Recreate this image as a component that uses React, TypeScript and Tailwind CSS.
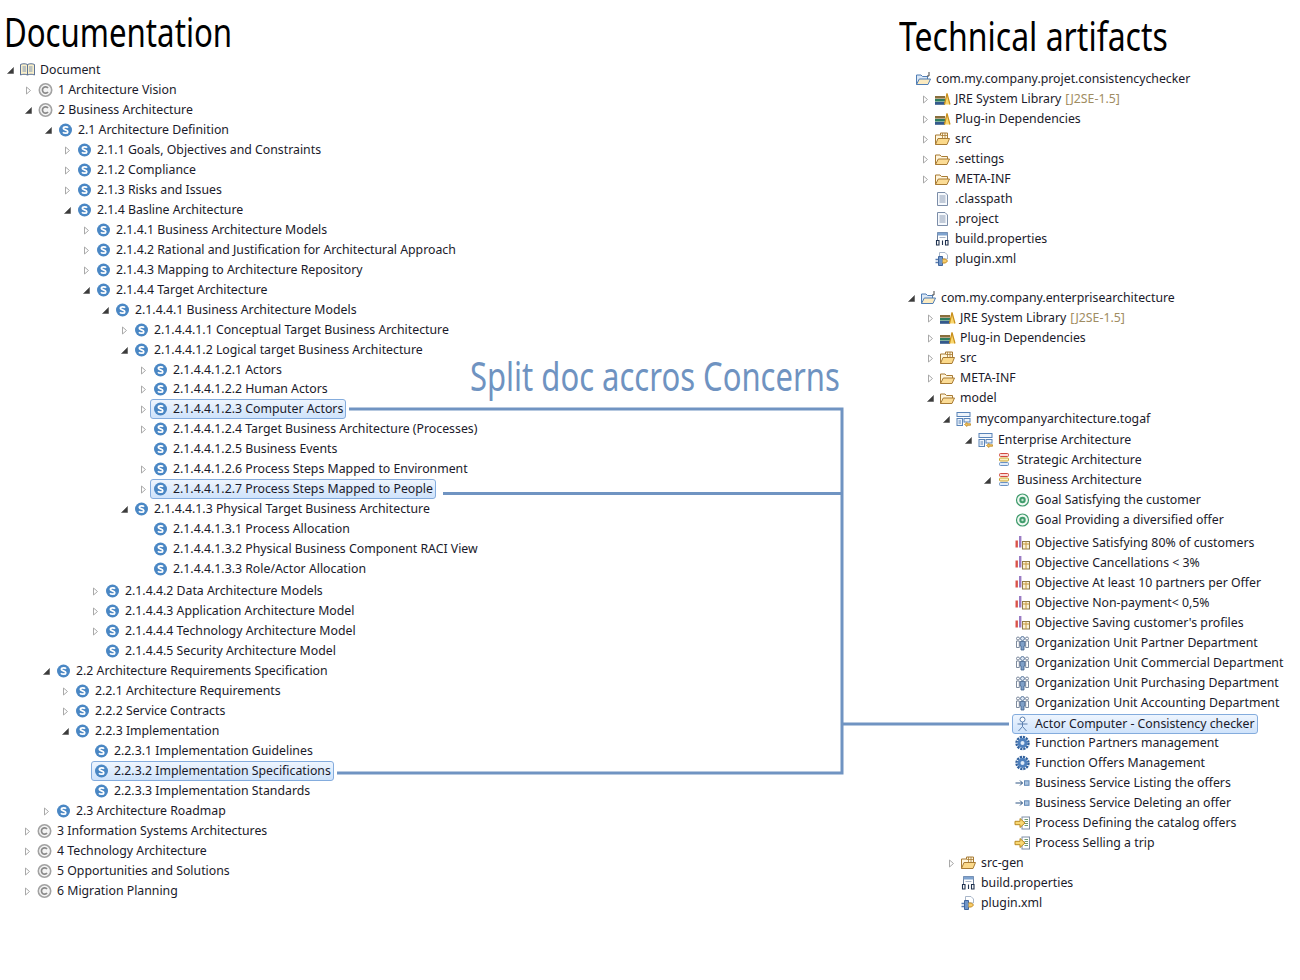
import React from 'react'

type IconName = 'book' | 'copy' | 'sec' | 'project' | 'lib' | 'pkg' | 'folder' | 'file' | 'props' | 'plugin' | 'togaf' | 'layer' | 'goal' | 'objective' | 'org' | 'actor' | 'gear' | 'service' | 'process'

type Item = {
    x: number
    label: string
    icon: IconName
    arrow?: 'open' | 'down'
    selected?: boolean
    note?: string
    space?: string
}

const docRows: Item[] = [
    { x: 40, label: 'Document', icon: 'book', arrow: 'down' },
    { x: 58, label: '1 Architecture Vision', icon: 'copy', arrow: 'open' },
    { x: 58, label: '2 Business Architecture', icon: 'copy', arrow: 'down' },
    { x: 78, label: '2.1 Architecture Definition', icon: 'sec', arrow: 'down' },
    { x: 97, label: '2.1.1 Goals, Objectives and Constraints', icon: 'sec', arrow: 'open' },
    { x: 97, label: '2.1.2 Compliance', icon: 'sec', arrow: 'open' },
    { x: 97, label: '2.1.3 Risks and Issues', icon: 'sec', arrow: 'open' },
    { x: 97, label: '2.1.4 Basline Architecture', icon: 'sec', arrow: 'down' },
    { x: 116, label: '2.1.4.1 Business Architecture Models', icon: 'sec', arrow: 'open' },
    { x: 116, label: '2.1.4.2 Rational and Justification for Architectural Approach', icon: 'sec', arrow: 'open' },
    { x: 116, label: '2.1.4.3 Mapping to Architecture Repository', icon: 'sec', arrow: 'open' },
    { x: 116, label: '2.1.4.4 Target Architecture', icon: 'sec', arrow: 'down' },
    { x: 135, label: '2.1.4.4.1 Business Architecture Models', icon: 'sec', arrow: 'down' },
    { x: 154, label: '2.1.4.4.1.1 Conceptual Target Business Architecture', icon: 'sec', arrow: 'open' },
    { x: 154, label: '2.1.4.4.1.2 Logical target Business Architecture', icon: 'sec', arrow: 'down' },
    { x: 173, label: '2.1.4.4.1.2.1 Actors', icon: 'sec', arrow: 'open' },
    { x: 173, label: '2.1.4.4.1.2.2 Human Actors', icon: 'sec', arrow: 'open', space: '-mt-px' },
    { x: 173, label: '2.1.4.4.1.2.3 Computer Actors', icon: 'sec', arrow: 'open', selected: true },
    { x: 173, label: '2.1.4.4.1.2.4 Target Business Architecture (Processes)', icon: 'sec', arrow: 'open' },
    { x: 173, label: '2.1.4.4.1.2.5 Business Events', icon: 'sec' },
    { x: 173, label: '2.1.4.4.1.2.6 Process Steps Mapped to Environment', icon: 'sec', arrow: 'open' },
    { x: 173, label: '2.1.4.4.1.2.7 Process Steps Mapped to People', icon: 'sec', arrow: 'open', selected: true },
    { x: 154, label: '2.1.4.4.1.3 Physical Target Business Architecture', icon: 'sec', arrow: 'down' },
    { x: 173, label: '2.1.4.4.1.3.1 Process Allocation', icon: 'sec' },
    { x: 173, label: '2.1.4.4.1.3.2 Physical Business Component RACI View', icon: 'sec' },
    { x: 173, label: '2.1.4.4.1.3.3 Role/Actor Allocation', icon: 'sec' },
    { x: 125, label: '2.1.4.4.2 Data Architecture Models', icon: 'sec', arrow: 'open', space: 'mt-[2px]' },
    { x: 125, label: '2.1.4.4.3 Application Architecture Model', icon: 'sec', arrow: 'open' },
    { x: 125, label: '2.1.4.4.4 Technology Architecture Model', icon: 'sec', arrow: 'open' },
    { x: 125, label: '2.1.4.4.5 Security Architecture Model', icon: 'sec' },
    { x: 76, label: '2.2 Architecture Requirements Specification', icon: 'sec', arrow: 'down' },
    { x: 95, label: '2.2.1 Architecture Requirements', icon: 'sec', arrow: 'open' },
    { x: 95, label: '2.2.2 Service Contracts', icon: 'sec', arrow: 'open' },
    { x: 95, label: '2.2.3 Implementation', icon: 'sec', arrow: 'down' },
    { x: 114, label: '2.2.3.1 Implementation Guidelines', icon: 'sec' },
    { x: 114, label: '2.2.3.2 Implementation Specifications', icon: 'sec', selected: true },
    { x: 114, label: '2.2.3.3 Implementation Standards', icon: 'sec' },
    { x: 76, label: '2.3 Architecture Roadmap', icon: 'sec', arrow: 'open' },
    { x: 57, label: '3 Information Systems Architectures', icon: 'copy', arrow: 'open' },
    { x: 57, label: '4 Technology Architecture', icon: 'copy', arrow: 'open' },
    { x: 57, label: '5 Opportunities and Solutions', icon: 'copy', arrow: 'open' },
    { x: 57, label: '6 Migration Planning', icon: 'copy', arrow: 'open' },
]

// x values on this side are relative to the right column (starts at 899)
const techRows: Item[] = [
    { x: 37, label: 'com.my.company.projet.consistencychecker', icon: 'project' },
    { x: 56, label: 'JRE System Library', note: '[J2SE-1.5]', icon: 'lib', arrow: 'open' },
    { x: 56, label: 'Plug-in Dependencies', icon: 'lib', arrow: 'open' },
    { x: 56, label: 'src', icon: 'pkg', arrow: 'open' },
    { x: 56, label: '.settings', icon: 'folder', arrow: 'open' },
    { x: 56, label: 'META-INF', icon: 'folder', arrow: 'open' },
    { x: 56, label: '.classpath', icon: 'file' },
    { x: 56, label: '.project', icon: 'file' },
    { x: 56, label: 'build.properties', icon: 'props' },
    { x: 56, label: 'plugin.xml', icon: 'plugin' },
    { x: 42, label: 'com.my.company.enterprisearchitecture', icon: 'project', arrow: 'down', space: 'mt-[19px]' },
    { x: 61, label: 'JRE System Library', note: '[J2SE-1.5]', icon: 'lib', arrow: 'open' },
    { x: 61, label: 'Plug-in Dependencies', icon: 'lib', arrow: 'open' },
    { x: 61, label: 'src', icon: 'pkg', arrow: 'open' },
    { x: 61, label: 'META-INF', icon: 'folder', arrow: 'open' },
    { x: 61, label: 'model', icon: 'folder', arrow: 'down' },
    { x: 77, label: 'mycompanyarchitecture.togaf', icon: 'togaf', arrow: 'down', space: 'mt-px' },
    { x: 99, label: 'Enterprise Architecture', icon: 'togaf', arrow: 'down', space: 'mt-px' },
    { x: 118, label: 'Strategic Architecture', icon: 'layer' },
    { x: 118, label: 'Business Architecture', icon: 'layer', arrow: 'down' },
    { x: 136, label: 'Goal Satisfying the customer', icon: 'goal' },
    { x: 136, label: 'Goal Providing a diversified offer', icon: 'goal' },
    { x: 136, label: 'Objective Satisfying 80% of customers', icon: 'objective', space: 'mt-[3px]' },
    { x: 136, label: 'Objective Cancellations < 3%', icon: 'objective' },
    { x: 136, label: 'Objective At least 10 partners per Offer', icon: 'objective' },
    { x: 136, label: 'Objective Non-payment< 0,5%', icon: 'objective' },
    { x: 136, label: "Objective Saving customer's profiles", icon: 'objective' },
    { x: 136, label: 'Organization Unit Partner Department', icon: 'org' },
    { x: 136, label: 'Organization Unit Commercial Department', icon: 'org' },
    { x: 136, label: 'Organization Unit Purchasing Department', icon: 'org' },
    { x: 136, label: 'Organization Unit Accounting Department', icon: 'org' },
    { x: 136, label: 'Actor Computer - Consistency checker', icon: 'actor', selected: true, space: 'mt-px' },
    { x: 136, label: 'Function Partners management', icon: 'gear', space: '-mt-px' },
    { x: 136, label: 'Function Offers Management', icon: 'gear' },
    { x: 136, label: 'Business Service Listing the offers', icon: 'service' },
    { x: 136, label: 'Business Service Deleting an offer', icon: 'service' },
    { x: 136, label: 'Process Defining the catalog offers', icon: 'process' },
    { x: 136, label: 'Process Selling a trip', icon: 'process' },
    { x: 82, label: 'src-gen', icon: 'pkg', arrow: 'open' },
    { x: 82, label: 'build.properties', icon: 'props' },
    { x: 82, label: 'plugin.xml', icon: 'plugin' },
]

const Twisty = ({ kind }: { kind?: 'open' | 'down' }) => (
    <span className="w-[18px] h-5 flex items-center justify-center shrink-0">
        {kind === 'open' && (
            <svg width="9" height="9" viewBox="0 0 9 9">
                <path d="M2.5 1 L6.5 4.5 L2.5 8 Z" fill="#fff" stroke="#a9a9a9" />
            </svg>
        )}
        {kind === 'down' && (
            <svg width="9" height="9" viewBox="0 0 9 9">
                <path d="M7.5 1.5 V7.5 H1.5 Z" fill="#3c3c3c" stroke="#555" strokeWidth="0.6" />
            </svg>
        )}
    </span>
)

const Glyph = ({ name }: { name: IconName }) => {
    switch (name) {
        case 'book':
            return (
                <>
                    <path d="M1 2.5 C3 1.5 6 1.5 8 2.5 C10 1.5 13 1.5 15 2.5 V13 C13 12 10 12 8 13 C6 12 3 12 1 13 Z" fill="#f8eec9" stroke="#5d7396" />
                    <path d="M8 2.5 V13" stroke="#5d7396" />
                    <path d="M3 5 H6.5 M3 7 H6.5 M3 9 H6.5 M9.5 5 H13 M9.5 7 H13 M9.5 9 H13" stroke="#7f96b8" />
                </>
            )
        case 'copy':
            return (
                <>
                    <circle cx="8" cy="8" r="6.2" fill="#f4f4f4" stroke="#a2a2a2" strokeWidth="1.6" />
                    <path d="M10.5 6.1 A3.1 3.1 0 1 0 10.5 9.9" fill="none" stroke="#8a8a8a" strokeWidth="1.7" />
                </>
            )
        case 'sec':
            return (
                <>
                    <circle cx="8" cy="8" r="6.5" fill="#4a87c4" />
                    <path d="M10.5 5.7 C9.7 4.5 6.1 4.3 5.8 6.2 C5.5 8.2 10.5 7.6 10.3 9.8 C10.1 11.7 6.5 11.5 5.5 10.2" fill="none" stroke="#fff" strokeWidth="1.8" />
                </>
            )
        case 'project':
            return (
                <>
                    <path d="M1 13.5 V4 H5.5 L7 5.5 H12 V8" fill="#dce8f5" stroke="#4f7db5" />
                    <path d="M1 13.5 L3.8 8 H15 L12.5 13.5 Z" fill="#fbeac0" stroke="#4f7db5" />
                    <path d="M13.5 1 V5 H11.5" fill="none" stroke="#444" />
                </>
            )
        case 'lib':
            return (
                <>
                    <rect x="0.5" y="5" width="10" height="2.6" fill="#8a6f3c" />
                    <rect x="0.5" y="8" width="10" height="2.6" fill="#2f7d5f" />
                    <rect x="0.5" y="11" width="10" height="2.8" fill="#34598c" />
                    <path d="M10 13.5 L12.5 2.5 L15.5 13.5" fill="#f9d76f" stroke="#c98f1a" strokeWidth="1.2" />
                </>
            )
        case 'pkg':
            return (
                <>
                    <path d="M1 13.5 V4 H6 V2 H13 V7" fill="#fff7df" stroke="#a87b34" />
                    <path d="M8 2 V7 M10.5 2 V7 M6 4.5 H13" stroke="#a87b34" strokeWidth="0.8" />
                    <path d="M1 13.5 L3.5 7.5 H15 L12.5 13.5 Z" fill="#fbd98a" stroke="#a87b34" />
                </>
            )
        case 'folder':
            return (
                <>
                    <path d="M1 13.5 V4 H5.5 L7 5.5 H13 V8" fill="#fff5dc" stroke="#a87b34" />
                    <path d="M1 13.5 L3.8 8 H15 L12.5 13.5 Z" fill="#fbdc96" stroke="#a87b34" />
                </>
            )
        case 'file':
            return (
                <>
                    <path d="M3 1.5 H10.5 L13 4 V14.5 H3 Z" fill="#f6f9fd" stroke="#7b8da8" />
                    <path d="M5 5 H11 M5 7 H11 M5 9 H11 M5 11 H11" stroke="#8c9cb4" />
                </>
            )
        case 'props':
            return (
                <>
                    <path d="M3 1.5 H13 V14.5 H3 Z" fill="#fff" stroke="#6d7f9c" />
                    <rect x="3" y="1.5" width="10" height="3" fill="#7fa3cf" />
                    <path d="M5 6.5 H11" stroke="#a7b4c7" />
                    <rect x="1" y="9" width="14" height="6" fill="#fff" />
                    <path d="M2 9.5 H4.5 V14 H2 Z M8 9.5 V14 M11 9.5 H13.5 V14 H11 Z" fill="none" stroke="#20324f" strokeWidth="1.1" />
                </>
            )
        case 'plugin':
            return (
                <>
                    <path d="M5 1.5 H10.5 L13 4 V8 H5 Z" fill="#fff" stroke="#a8b6c9" />
                    <path d="M1 8.5 H4 M1 11.5 H4" stroke="#5a7db0" strokeWidth="1.3" />
                    <path d="M4 5.5 H8 V14.5 H4 Z" fill="#6f95c9" stroke="#3f659c" />
                    <path d="M8 8 H11 L13 10 L11 12 H8" fill="#f6cb68" stroke="#c48a1f" />
                </>
            )
        case 'togaf':
            return (
                <>
                    <rect x="1.5" y="1.5" width="13" height="4" fill="#eef4fb" stroke="#5a84b8" />
                    <rect x="1.5" y="7.5" width="5.5" height="7" fill="#eef4fb" stroke="#5a84b8" />
                    <path d="M3 10 H5.5 M3 12 H5.5" stroke="#5a84b8" />
                    <rect x="8.5" y="7.5" width="6" height="3.5" fill="#eef4fb" stroke="#5a84b8" />
                    <path d="M9 13.5 L11.5 11.5 V12.7 H15 V14.3 H11.5 V15.5 Z" fill="#f3c55f" stroke="#b9821d" strokeWidth="0.7" />
                </>
            )
        case 'layer':
            return (
                <>
                    <rect x="3" y="1.5" width="9" height="3" rx="1" fill="#f9dcd8" stroke="#d2493f" />
                    <rect x="3" y="6" width="9" height="3" rx="1" fill="#fbf0c2" stroke="#c8a232" />
                    <rect x="3" y="10.5" width="9" height="3" rx="1" fill="#dfeaf7" stroke="#6a92c4" />
                </>
            )
        case 'goal':
            return (
                <>
                    <circle cx="8" cy="8" r="6" fill="#eef7f1" stroke="#3e9a6b" strokeWidth="1.2" />
                    <circle cx="8" cy="8" r="3.2" fill="#3f9c6c" />
                    <circle cx="8" cy="8" r="1.2" fill="#bfe3cd" />
                </>
            )
        case 'objective':
            return (
                <>
                    <rect x="1" y="5.5" width="2.4" height="7" fill="#d9534a" />
                    <rect x="4.5" y="1" width="2.4" height="11.5" fill="#9b7bc4" />
                    <rect x="8" y="6.5" width="7" height="7.5" fill="#fbf3da" stroke="#8f7a4a" />
                    <path d="M8 9 H15 M11.5 6.5 V14" stroke="#c89a3f" />
                </>
            )
        case 'org':
            return (
                <>
                    <circle cx="3.5" cy="3.5" r="1.5" fill="#fff" stroke="#5e6f86" strokeWidth="0.8" />
                    <circle cx="12.5" cy="3.5" r="1.5" fill="#fff" stroke="#5e6f86" strokeWidth="0.8" />
                    <path d="M2 6 H4.8 V12.5 H2 Z M11.2 6 H14 V12.5 H11.2 Z" fill="#fff" stroke="#5e6f86" strokeWidth="0.8" />
                    <circle cx="8" cy="3.5" r="2" fill="#dfe8f3" stroke="#3f5f8a" strokeWidth="0.8" />
                    <path d="M5.7 6.5 H10.3 V11 H9.5 V15 H6.5 V11 H5.7 Z" fill="#7fa0c8" stroke="#3f5f8a" strokeWidth="0.8" />
                </>
            )
        case 'actor':
            return (
                <>
                    <circle cx="8" cy="3.5" r="2.5" fill="#fff" stroke="#5b7fae" />
                    <path d="M8 6 V10.5 M3 8 H13 M8 10.5 L4 15 M8 10.5 L12 15" fill="none" stroke="#5b7fae" />
                </>
            )
        case 'gear':
            return (
                <>
                    <circle cx="8" cy="8" r="6" fill="none" stroke="#2f5f9c" strokeWidth="2.4" strokeDasharray="2.2 0.9" />
                    <circle cx="8" cy="8" r="5" fill="#4f80bd" />
                    <circle cx="8" cy="8" r="2" fill="#dfeaf7" />
                </>
            )
        case 'service':
            return (
                <>
                    <path d="M1 8 H8 M5.5 5.5 L8 8 L5.5 10.5" fill="none" stroke="#2f5582" />
                    <rect x="10" y="5.8" width="4.5" height="4.5" fill="#a9c3e0" stroke="#5f86b4" />
                </>
            )
        case 'process':
            return (
                <>
                    <rect x="7.5" y="2" width="7.5" height="12" fill="#fff" stroke="#7e8ea5" />
                    <path d="M10 4.5 H13.5 M10 6.5 H13.5 M10 8.5 H13.5 M10 10.5 H13.5" stroke="#6f9a72" />
                    <path d="M0.5 6.3 H5.5 V3.5 L10.5 8 L5.5 12.5 V9.7 H0.5 Z" fill="#f8d774" stroke="#b98a22" />
                </>
            )
    }
}

const Row = ({ item }: { item: Item }) => (
    <div className={`h-5 flex items-center text-[12.3px] text-[#1a1a2a] whitespace-nowrap ${item.space ?? ''}`} style={{ marginLeft: item.x - 39 }}>
        <Twisty kind={item.arrow} />
        <span
            className={
                item.selected
                    ? 'h-5 flex items-center -ml-[2px] pl-px pr-[2px] border border-[#84acdd] rounded-[3px] bg-gradient-to-b from-[#eef5fe] to-[#cfe3fb]'
                    : 'h-5 flex items-center -ml-[2px] pl-px pr-[2px] border border-transparent'
            }
        >
            <svg width="17" height="16" viewBox="0 0 16 16" className="shrink-0">
                <Glyph name={item.icon} />
            </svg>
            <span className="ml-1">{item.label}</span>
            {item.note && <span className="ml-1 text-[#a08c62]">{item.note}</span>}
        </span>
    </div>
)

const App = () => {
    return (
        <div className="relative w-[1300px] h-[980px] bg-white overflow-hidden font-['Noto_Sans',sans-serif]">
            <div className="flex">
                <div className="w-[899px] shrink-0">
                    <h1 className="h-[60px] pl-[5px] pt-[4px] text-[40px] leading-[55px] text-black origin-left scale-x-[0.78] whitespace-nowrap">Documentation</h1>
                    {docRows.map((r) => (
                        <Row key={r.label} item={r} />
                    ))}
                </div>
                <div className="flex-1">
                    <h1 className="h-[69px] pt-[8px] text-[40px] leading-[55px] text-black origin-left scale-x-[0.8] whitespace-nowrap">Technical artifacts</h1>
                    {techRows.map((r, i) => (
                        <Row key={r.label + i} item={r} />
                    ))}
                </div>
            </div>

            {/* floats over the gap between the two trees */}
            <div className="absolute left-[470px] top-[351px] text-[40px] leading-[50px] text-[#6f93c1] origin-left scale-x-[0.775] whitespace-nowrap">Split doc accros Concerns</div>

            <svg className="absolute inset-0 pointer-events-none" width="1300" height="980">
                <path d="M349 409 H842 V773 H337 M443 493.5 H842 M842 724 H1009" fill="none" stroke="#7094c2" strokeWidth="3" />
            </svg>
        </div>
    )
}

export default App
